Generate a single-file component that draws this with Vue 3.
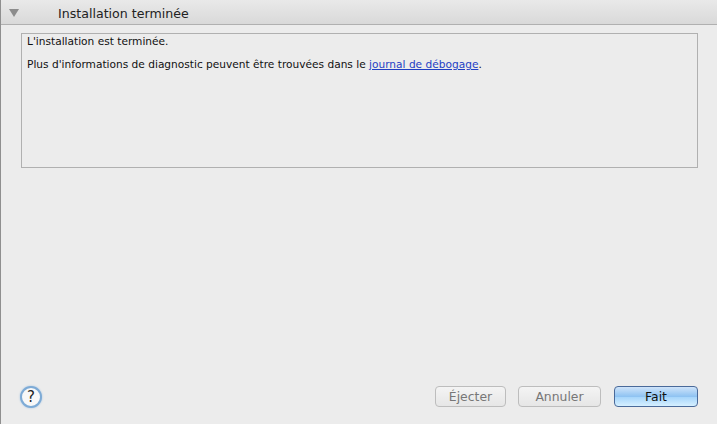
<template>
  <div class="window">
    <div class="header">
      <span class="triangle"></span>
      <span class="header-title">Installation terminée</span>
    </div>

    <div class="content">
      <div class="log-box">
        <p class="line-first">L'installation est terminée.</p>
        <p class="line-second">
          Plus d'informations de diagnostic peuvent être trouvées dans le
          <a href="#" class="log-link">journal de débogage</a>.
        </p>
      </div>
    </div>

    <div class="footer">
      <button class="help-btn">?</button>
      <div class="actions">
        <button class="btn" disabled>Éjecter</button>
        <button class="btn" disabled>Annuler</button>
        <button class="btn primary">Fait</button>
      </div>
    </div>
  </div>
</template>

<script setup>
</script>

<style>
html,
body {
  margin: 0;
  background: #ececec;
}
</style>

<style scoped>
.window {
  width: 717px;
  height: 424px;
  box-sizing: border-box;
  background: #ececec;
  border-left: 1px solid #8f8f8f;
  display: flex;
  flex-direction: column;
  overflow: hidden;
  font-family: "DejaVu Sans", sans-serif;
  color: #111;
}

.header {
  height: 25px;
  flex-shrink: 0;
  display: flex;
  align-items: center;
  padding-left: 8px;
  background: linear-gradient(#e9e9e9, #d9d9d9);
  border-bottom: 1px solid #b0b0b0;
  box-sizing: border-box;
}

.triangle {
  width: 0;
  height: 0;
  margin-top: 1px;
  border-left: 5px solid transparent;
  border-right: 5px solid transparent;
  border-top: 8px solid #8c8c8c;
}

.header-title {
  margin-left: 39px;
  margin-top: 3px;
  font-size: 12.6px;
  color: #222;
}

.content {
  padding: 8px 19px 0 20px;
}

.log-box {
  height: 135px;
  box-sizing: border-box;
  border: 1px solid #b0b0b0;
  padding: 1px 5px;
  font-size: 10.6px;
}

.log-box p {
  margin: 0;
  line-height: 13px;
}

.line-second {
  padding-top: 10px;
}

.log-link {
  color: #1f3fc4;
  text-decoration: underline;
}

.footer {
  margin-top: auto;
  height: 50px;
  box-sizing: border-box;
  padding: 10px 19px 0 19px;
  display: flex;
  justify-content: space-between;
  align-items: flex-start;
}

.help-btn {
  width: 22px;
  height: 22px;
  margin-top: 2px;
  padding: 0;
  border-radius: 50%;
  border: 2px solid #7eabd6;
  background: #f8f8f8;
  box-shadow: 0 0 2px #9dc0e2;
  font-family: "DejaVu Sans", sans-serif;
  font-weight: 400;
  font-size: 15px;
  color: #222;
}

.actions {
  display: flex;
  gap: 12px;
  margin-top: 2px;
}

.btn {
  width: 71px;
  height: 21px;
  padding: 0;
  border-radius: 4px;
  border: 1px solid #bdbdbd;
  background: linear-gradient(#f4f4f4, #e6e6e6);
  font-family: "DejaVu Sans", sans-serif;
  font-size: 12.4px;
  color: #777;
}

.btn + .btn {
  width: 83px;
}

.btn.primary {
  margin-left: 1px;
  width: 84px;
  border-color: #4a6a9a;
  background: linear-gradient(#cfe4fa 0%, #8fc3f2 50%, #a8d6fb 55%, #d6f0ff 100%);
  color: #111;
}
</style>
